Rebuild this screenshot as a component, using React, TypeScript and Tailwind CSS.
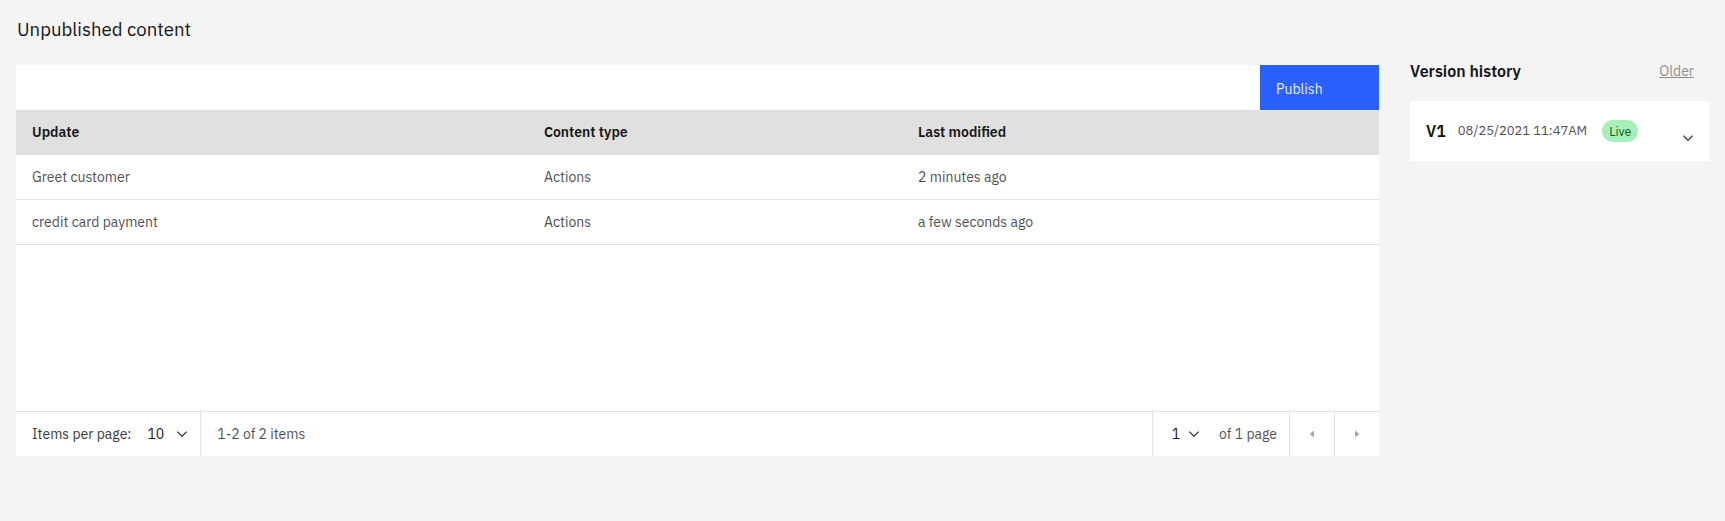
import React from "react";

const ChevronDown = ({ className = "" }: { className?: string }) => (
  <svg width="16" height="16" viewBox="0 0 16 16" className={className} fill="currentColor">
    <path d="M8 11L3 6l.7-.7L8 9.6l4.3-4.3L13 6z" />
  </svg>
);

const CaretLeft = () => (
  <svg width="16" height="16" viewBox="0 0 16 16" fill="currentColor">
    <path d="M10 4.5v7L5.5 8z" />
  </svg>
);

const CaretRight = () => (
  <svg width="16" height="16" viewBox="0 0 16 16" fill="currentColor">
    <path d="M6 4.5v7L10.5 8z" />
  </svg>
);

const rows = [
  { update: "Greet customer", type: "Actions", modified: "2 minutes ago" },
  { update: "credit card payment", type: "Actions", modified: "a few seconds ago" },
];

export default function App() {
  return (
    <div
      className="min-h-screen bg-[#f4f4f4] px-4 text-[#161616]"
      style={{ fontFamily: '"IBM Plex Sans", "Liberation Sans", Arial, sans-serif' }}
    >
      <h1 className="pt-[16px] text-[18.6px] leading-[26px] font-normal mb-[23px] pl-[1px]">Unpublished content</h1>
      <div className="flex gap-[31px] items-start">
        {/* Left: table */}
        <div className="flex-1 bg-white">
          <div className="flex justify-end h-[45px]">
            <button className="w-[119px] h-full bg-[#2b60ff] text-[#e8edff] text-[14px] text-left pl-[16px] pt-[3px]">
              Publish
            </button>
          </div>
          <div className="grid grid-cols-[512px_374px_1fr] h-[45px] bg-[#e0e0e0] items-center text-[14px] font-semibold text-[#161616]">
            <div className="pl-4">Update</div>
            <div className="pl-4">Content type</div>
            <div className="pl-4">Last modified</div>
          </div>
          {rows.map((r) => (
            <div
              key={r.update}
              className="grid grid-cols-[512px_374px_1fr] h-[45px] border-b border-[#e0e0e0] items-center text-[14px] text-[#525252]"
            >
              <div className="pl-4">{r.update}</div>
              <div className="pl-4">{r.type}</div>
              <div className="pl-4">{r.modified}</div>
            </div>
          ))}
          <div className="h-[166px]" />
          <div className="flex h-[45px] border-t border-[#e0e0e0] text-[14px]">
            <div className="flex items-center pl-4 pr-[10px] border-r border-[#e0e0e0]">
              <span className="text-[#393939]">Items per page:</span>
              <span className="ml-[16px] text-[#161616]">10</span>
              <ChevronDown className="ml-[10px] text-[#161616]" />
            </div>
            <div className="flex items-center pl-4 text-[#525252] flex-1">1-2 of 2 items</div>
            <div className="flex items-center pl-[19px] pr-[12px] border-l border-[#e0e0e0]">
              <span className="text-[#161616]">1</span>
              <ChevronDown className="ml-[6px] text-[#161616]" />
              <span className="ml-[17px] text-[#525252]">of 1 page</span>
            </div>
            <div className="w-[45px] flex items-center justify-center border-l border-[#e0e0e0] text-[#a8a8a8]">
              <CaretLeft />
            </div>
            <div className="w-[45px] flex items-center justify-center border-l border-[#e0e0e0] text-[#a8a8a8]">
              <CaretRight />
            </div>
          </div>
        </div>

        {/* Right: version history */}
        <div className="w-[299px]">
          <div className="flex justify-between items-center h-[12px] mb-[24px]">
            <span className="text-[16px] font-semibold leading-[20px]">Version history</span>
            <span className="text-[14px] leading-[20px] text-[#8d8d8d] underline mr-[15px]">Older</span>
          </div>
          <div className="bg-white h-[60px] flex items-center pl-4 pr-[13px]">
            <span className="text-[16px] font-semibold">V1</span>
            <span className="ml-[12px] text-[13px] text-[#525252]">08/25/2021 11:47AM</span>
            <span className="ml-[15px] h-[22px] px-[7px] rounded-full bg-[#a7f0ba] text-[#0e6027] text-[12.5px] flex items-center">
              Live
            </span>
            <ChevronDown className="ml-auto mt-[14px] text-[#161616]" />
          </div>
        </div>
      </div>
    </div>
  );
}
